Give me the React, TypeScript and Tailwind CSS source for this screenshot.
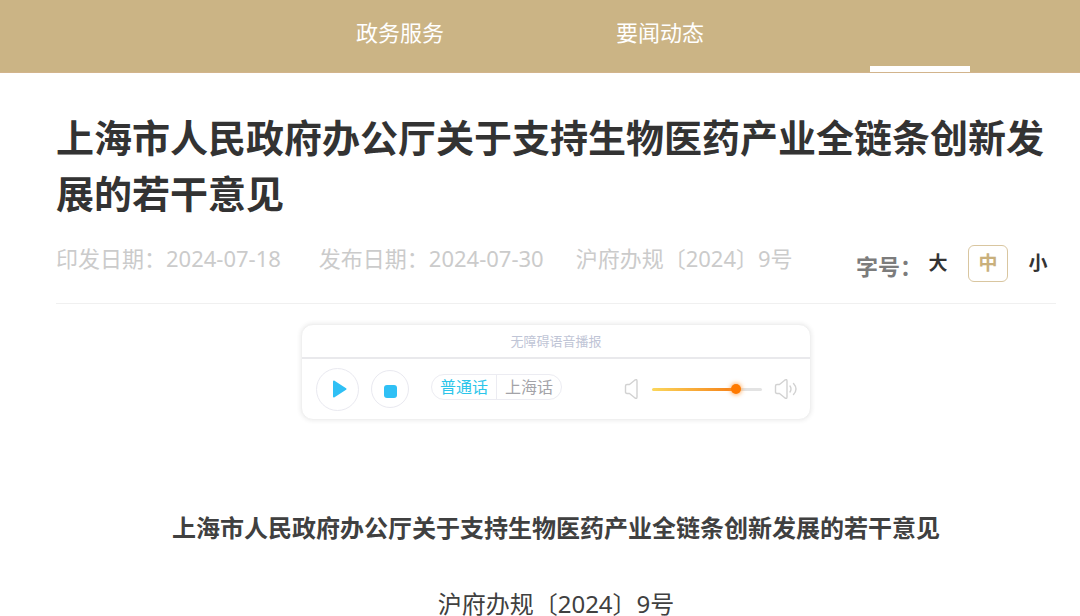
import { useState } from "react";

const navItems = [
  { label: "", name: "首页", active: false },
  { label: "政务服务", name: "政务服务", active: false },
  { label: "要闻动态", name: "要闻动态", active: false },
  { label: "", name: "政务公开", active: true },
];

const title = "上海市人民政府办公厅关于支持生物医药产业全链条创新发展的若干意见";

function NavBar() {
  return (
    <nav className="border-b border-[#d2b48c] bg-[#cbb485] pl-2.5 pr-[30px]">
      <div className="grid h-[72px] grid-cols-4">
        {navItems.map((item) => (
          <a
            key={item.name}
            href="#"
            aria-label={item.name}
            className="flex flex-col items-center justify-between pt-4 text-[22px] leading-8 text-white"
          >
            <span>{item.label}</span>
            {item.active && <span className="h-1.5 w-[100px] bg-white" />}
          </a>
        ))}
      </div>
    </nav>
  );
}

function FontSizePicker() {
  const [size, setSize] = useState("中");
  return (
    <div className="flex items-center pr-0.5 pt-[3px]" role="group" aria-label="字号">
      <span className="text-[22px] font-bold leading-9 text-[#7c7c7c]">字号：</span>
      <div className="flex gap-3.5 pb-1">
        {["大", "中", "小"].map((s) => (
          <button
            key={s}
            type="button"
            aria-pressed={size === s}
            onClick={() => setSize(s)}
            className={
              size === s
                ? "h-[37px] w-10 rounded-md border border-[#d9c6a0] text-[19px] font-bold leading-none text-[#c9b07c]"
                : "h-[37px] w-8 text-[19px] font-bold leading-none text-[#333]"
            }
          >
            {s}
          </button>
        ))}
      </div>
    </div>
  );
}

function Speaker({ loud = false }: { loud?: boolean }) {
  return (
    <svg
      aria-hidden="true"
      width={loud ? 24 : 16}
      height="22"
      viewBox={loud ? "0 0 24 22" : "0 0 16 22"}
      fill="none"
      stroke="#d2d2d2"
      strokeWidth="1.4"
      strokeLinecap="round"
      strokeLinejoin="round"
    >
      <path d="M3 6.5H5.5L11 2Q13 1 13 3V19Q13 21 11 20L5.5 15.5H3Q1.5 15.5 1.5 14V8Q1.5 6.5 3 6.5Z" />
      {loud && <path d="M16 8Q18 11 16 14M19.5 5.5Q24.5 11 19.5 16.5" />}
    </svg>
  );
}

function VoicePlayer() {
  const [lang, setLang] = useState("普通话");
  const [volume, setVolume] = useState(79);
  const fill = `linear-gradient(to right, #fbd75c, #f57c14 ${volume}%, #e3e3e3 ${volume}%)`;
  return (
    <section
      aria-label="无障碍语音播报"
      className="mx-auto w-full max-w-[510px] rounded-xl border border-[#f0f0f0] bg-white shadow-[0_0_4px_1px_rgba(0,0,0,0.07)]"
    >
      <h2 className="border-b-2 border-[#e9e9ec] text-center text-[13px] leading-8 text-[#bfc5d6]">
        无障碍语音播报
      </h2>
      <div className="flex h-[60px] items-center pl-3.5 pr-3">
        <button
          type="button"
          aria-label="播放"
          className="flex size-[43px] items-center justify-center rounded-full border border-[#e9e9f0]"
        >
          <svg width="20" height="20" viewBox="0 0 20 20" aria-hidden="true">
            <path
              d="M5 2.5L16.5 10L5 17.5Z"
              transform="translate(1 0)"
              fill="#2fc0f5"
              stroke="#2fc0f5"
              strokeWidth="2"
              strokeLinejoin="round"
            />
          </svg>
        </button>
        <button
          type="button"
          aria-label="停止"
          className="ml-3 flex size-[38px] items-center justify-center rounded-full border border-[#e9e9f0] pt-1"
        >
          <span className="size-[13px] rounded-[3px] bg-[#2fc0f5]" />
        </button>
        <div className="mb-1 ml-[22px] flex h-[26px] rounded-full border border-[#ececf2]">
          {["普通话", "上海话"].map((l) => (
            <button
              key={l}
              type="button"
              aria-pressed={lang === l}
              onClick={() => setLang(l)}
              className={
                lang === l
                  ? "px-2 text-[16px] leading-6 text-[#2cc5ea] not-first:border-l not-first:border-[#ececf2]"
                  : "px-2 text-[16px] leading-6 text-[#a3a3a8] not-first:border-l not-first:border-[#ececf2]"
              }
            >
              {l}
            </button>
          ))}
        </div>
        <div className="ml-auto flex items-center">
          <Speaker />
          <input
            type="range"
            aria-label="音量"
            min={0}
            max={100}
            value={volume}
            onChange={(e) => setVolume(Number(e.target.value))}
            style={{ background: fill }}
            className="ml-3 mr-3 h-[3px] w-[110px] appearance-none rounded-full [&::-webkit-slider-thumb]:size-2.5 [&::-webkit-slider-thumb]:appearance-none [&::-webkit-slider-thumb]:rounded-full [&::-webkit-slider-thumb]:bg-[#ff7a00] [&::-webkit-slider-thumb]:shadow-[0_0_4px_1px_rgba(255,150,50,0.7)]"
          />
          <Speaker loud />
        </div>
      </div>
    </section>
  );
}

export default function App() {
  return (
    <div className="min-h-screen overflow-x-hidden bg-white font-['Noto_Sans','Noto_Sans_CJK_SC',sans-serif]">
      <NavBar />
      <main className="pl-14 pr-6 pt-9">
        <h1 className="text-[38px] font-bold leading-[56px] text-[#333]">{title}</h1>
        <div className="mb-5 mt-[21px] flex items-start justify-between border-b border-[#f0f0f0] pb-[17px]">
          <p className="flex text-[22px] leading-8 text-[#cbcbcb]">
            <span>印发日期：2024-07-18</span>
            <span className="ml-[38px]">发布日期：2024-07-30</span>
            <span className="ml-8">沪府办规〔2024〕9号</span>
          </p>
          <FontSizePicker />
        </div>
        <VoicePlayer />
        <article className="pt-[88px] text-center text-[24px] leading-10 text-[#404040]">
          <h2 className="font-bold">{title}</h2>
          <p className="mt-9">沪府办规〔2024〕9号</p>
        </article>
      </main>
    </div>
  );
}
